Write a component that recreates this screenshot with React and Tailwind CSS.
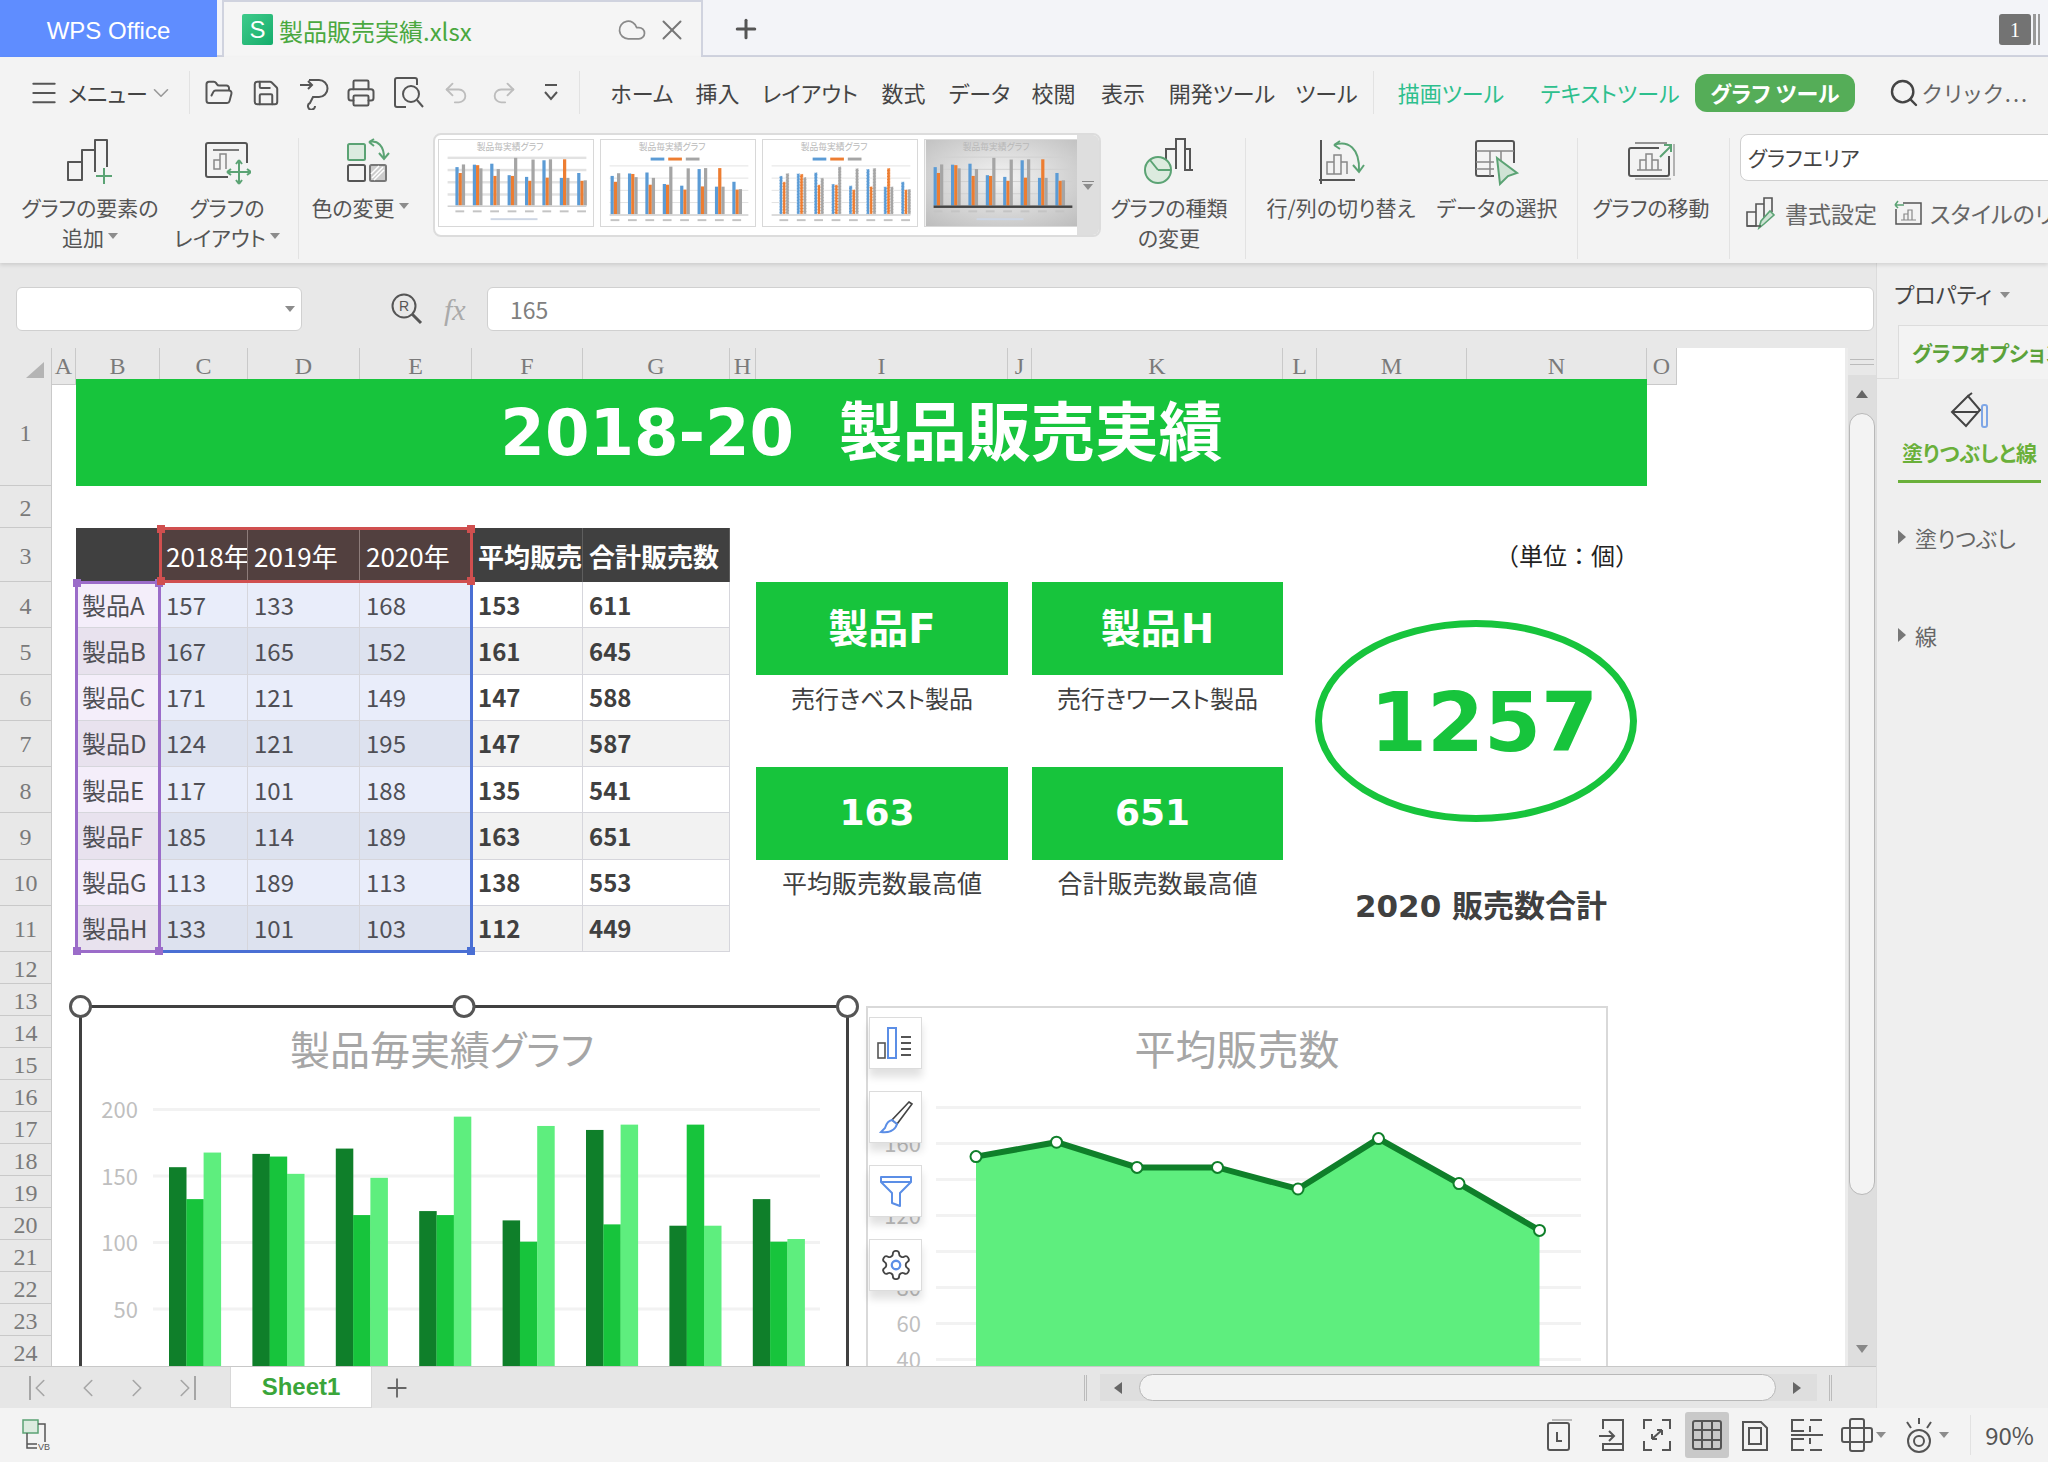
import React from 'react'
import { Cloud, X, Plus, Menu, ChevronDown, FolderOpen, Save, Printer, Undo2, Redo2, Search, ChevronLeft, ChevronRight } from 'lucide-react'

const COLS = ['A', 'B', 'C', 'D', 'E', 'F', 'G', 'H', 'I', 'J', 'K', 'L', 'M', 'N', 'O']
const ROWS = Array.from({ length: 24 }, (_, i) => i + 1)

const TABLE = [
  ['製品A', 157, 133, 168, 153, 611],
  ['製品B', 167, 165, 152, 161, 645],
  ['製品C', 171, 121, 149, 147, 588],
  ['製品D', 124, 121, 195, 147, 587],
  ['製品E', 117, 101, 188, 135, 541],
  ['製品F', 185, 114, 189, 163, 651],
  ['製品G', 113, 189, 113, 138, 553],
  ['製品H', 133, 101, 103, 112, 449],
]

const MENU_TABS = [
  ['ホーム', 'w-[82px]'],
  ['挿入', 'w-[69px]'],
  ['レイアウト', 'w-[116px]'],
  ['数式', 'w-[71px]'],
  ['データ', 'w-[81px]'],
  ['校閲', 'w-[67px]'],
  ['表示', 'w-[72px]'],
  ['開発ツール', 'w-[126px]'],
  ['ツール', 'w-[83px]'],
]

function Caret({ className = '' }) {
  return (
    <svg width="10" height="6" viewBox="0 0 10 6" className={`inline-block ${className}`}>
      <path d="M0 0h10L5 6z" fill="#8c8c8c" />
    </svg>
  )
}

function Sep({ className = '' }) {
  return <div className={`w-px shrink-0 self-stretch bg-[#e2e2e2] ${className}`} />
}

const INK = '#555'
const GR = '#5ba374'

function Ico({ children, w = 48, h = 48, box }) {
  return (
    <svg width={w} height={h} viewBox={box || `0 0 ${w} ${h}`} fill="none" stroke={INK} strokeWidth="2" className="shrink-0">
      {children}
    </svg>
  )
}

function AddElementIcon() {
  return (
    <Ico>
      <path d="M2 42V24h14v18zM16 24V12h13v22M29 12V2h12v27" strokeLinejoin="round" />
      <path d="M38 30v16M30 38h16" stroke={GR} />
    </Ico>
  )
}

function LayoutIcon() {
  return (
    <Ico>
      <path d="M25 39H5a2 2 0 0 1-2-2V7a2 2 0 0 1 2-2h37a2 2 0 0 1 2 2v18" />
      <path d="M10 12h26" strokeWidth="1.5" />
      <path d="M11 31v-9h6v9zM17 31V16h6v15" strokeWidth="1.5" stroke="#888" />
      <path d="M36 22v24M24 34h24M36 22l-3 4M36 22l3 4M36 46l-3-4M36 46l3-4M24 34l4-3M24 34l4 3M48 34l-4-3M48 34l-4 3" stroke={GR} />
    </Ico>
  )
}

function ColorIcon() {
  return (
    <Ico>
      <rect x="3" y="6" width="17" height="16" rx="1.5" fill="#dcebdf" stroke={GR} />
      <rect x="3" y="27" width="17" height="16" rx="1.5" />
      <rect x="25" y="27" width="16" height="16" rx="1.5" fill="#ccc" stroke="#777" />
      <path d="M27 40l11-11M29 42l10-10M26 36l8-8" stroke="#fff" strokeWidth="1.5" />
      <path d="M24 4c9-2 15 4 15 16M34 15l5 6 5-6M24 4l5-3M24 4l5 4" stroke={GR} />
    </Ico>
  )
}

function ChartTypeIcon() {
  return (
    <Ico w={50} h={50}>
      <path d="M22 30V12h10v20M32 12V2h9v31h8M41 12h5v21" />
      <circle cx="14" cy="33" r="13" fill="#dcebdf" stroke={GR} />
      <path d="M14 33L6 23M14 33h13" stroke={GR} />
    </Ico>
  )
}

function SwitchIcon() {
  return (
    <Ico>
      <path d="M4 2v44M2 42h36" />
      <path d="M10 36V24h7v12zM17 36V17h7v19zM24 36V24h6v12" stroke="#888" strokeWidth="1.5" />
      <path d="M17 7c14-5 26 3 25 26M36 27l6 7 5-7M17 7l6-4M17 7l6 4" stroke={GR} />
    </Ico>
  )
}

function DataSelectIcon() {
  return (
    <Ico>
      <path d="M21 38H5a2 2 0 0 1-2-2V5a2 2 0 0 1 2-2h34a2 2 0 0 1 2 2v20" />
      <path d="M3 13h38M3 24h18M3 31h18M17 13v25M28 13v10" strokeWidth="1.5" stroke="#888" />
      <path d="M24 20l20 15-9 3-8 8z" fill="#cfe3d5" stroke={GR} />
    </Ico>
  )
}

function MoveIcon() {
  return (
    <Ico>
      <path d="M8 5h32" strokeWidth="1.2" />
      <path d="M2 36V12a2 2 0 0 1 2-2h28M42 18v18a2 2 0 0 1-2 2H4a2 2 0 0 1-2-2" />
      <path d="M47 6v32M8 41h36" strokeWidth="1.2" stroke="#888" />
      <path d="M10 32h25M13 32V22h6v10M19 32V16h6v16M25 32V22h6v10" strokeWidth="1.5" stroke="#888" />
      <path d="M33 19l11-11M37 7h7v7" stroke={GR} />
    </Ico>
  )
}

function FormatIcon() {
  return (
    <Ico w={32} h={34}>
      <path d="M2 30V16h9v14zM11 16V8h8v14M19 8V2h8v14" strokeWidth="1.6" />
      <path d="M14 32l2-7 9-10 4 4-10 9z" fill="#cfe3d5" stroke={GR} strokeWidth="1.6" />
      <path d="M2 30h14" strokeWidth="1.6" />
    </Ico>
  )
}

function ResetIcon() {
  return (
    <Ico w={30} h={30}>
      <path d="M10 5h18v21H3V11" strokeWidth="1.5" />
      <path d="M8 22h15M11 22v-6h4v6M15 22V12h4v10" strokeWidth="1.2" stroke="#888" />
      <path d="M2 7h9M2 7l3-4M2 7l3 3" stroke={GR} strokeWidth="1.5" />
    </Ico>
  )
}

function RibbonBtn({ icon, lines, caret, width, iconClass = '' }) {
  return (
    <div className={`flex flex-col items-center shrink-0 ${width}`}>
      <div className={`h-[48px] flex items-center justify-center ${iconClass}`}>{icon}</div>
      <div className="mt-[6px] text-[21px] leading-[30px] text-[#555] text-center whitespace-nowrap">
        {lines.map((l, i) => (
          <div key={l}>
            {l}
            {caret && i === lines.length - 1 && <Caret className="ml-1 mb-2" />}
          </div>
        ))}
      </div>
    </div>
  )
}

const SERIES = [
  [157, 167, 171, 124, 117, 185, 113, 133],
  [133, 165, 121, 121, 101, 114, 189, 101],
  [168, 152, 149, 195, 188, 189, 113, 103],
]

function MiniChart({ kind }) {
  const gray = kind === 3
  const legendTop = kind === 1 || kind === 2
  const base = legendTop ? 76 : 67
  const x0 = [16, 9, 16, 8][kind]
  const k = 0.25
  const barW = 3.3
  return (
    <svg viewBox="0 0 156 88" className="block shrink-0 w-[156px] h-[88px] border border-[#d8d8d8]">
      {gray ? (
        <>
          <defs>
            <radialGradient id="miniBg" cx="50%" cy="45%" r="75%">
              <stop offset="0%" stopColor="#f4f4f4" />
              <stop offset="100%" stopColor="#bcbcbc" />
            </radialGradient>
          </defs>
          <rect width="156" height="88" fill="url(#miniBg)" />
        </>
      ) : (
        <rect width="156" height="88" fill="#fff" />
      )}
      <text x="72" y="10" textAnchor="middle" fontSize="9" fill="#b8b8b8">製品毎実績グラフ</text>
      {legendTop && (
        <g>
          <rect x="50" y="18" width="14" height="3" fill="#5b9bd5" />
          <rect x="68" y="18" width="14" height="3" fill="#ed7d31" />
          <rect x="86" y="18" width="14" height="3" fill="#a5a5a5" />
        </g>
      )}
      {[0, 1, 2, 3].map((g) => (
        <rect key={g} x="8" y={base - 50 + g * 12.5} width="142" height={kind === 0 ? 2.5 : 1} fill={gray ? '#d0d0d0' : '#e2e2e2'} />
      ))}
      {SERIES.map((s, si) =>
        s.map((v, i) => (
          <rect
            key={`${si}-${i}`}
            x={x0 + i * 17.8 + si * barW}
            y={base - v * k}
            width={barW}
            height={v * k}
            fill={['#5b9bd5', '#ed7d31', '#a5a5a5'][si]}
            strokeDasharray={kind === 2 ? '2 1' : undefined}
            stroke={kind === 2 ? '#fff' : undefined}
            strokeWidth={kind === 2 ? 0.6 : 0}
          />
        )),
      )}
      <rect x="8" y={base} width="142" height={gray ? 2.5 : 1.5} fill={gray ? '#444' : '#cfcfcf'} />
      {Array.from({ length: 8 }, (_, i) => (
        <rect key={i} x={x0 + i * 17.8} y={base + 5} width="9" height="2" fill="#c4c4c4" />
      ))}
      {!legendTop && <rect x="52" y="80" width="48" height="2" fill="#cdd6e4" />}
    </svg>
  )
}

function Gallery() {
  return (
    <div className="ml-[12px] mt-[-5px] w-[668px] h-[104px] shrink-0 bg-white border-2 border-[#dcdcdc] rounded-[8px] flex overflow-hidden">
      <div className="flex-1 min-w-0 overflow-hidden flex gap-[6px] pl-[3px] pt-[4px]">
        {[0, 1, 2, 3].map((k) => (
          <MiniChart key={k} kind={k} />
        ))}
      </div>
      <div className="w-[22px] shrink-0 bg-[#dedede] flex flex-col items-center justify-center gap-[2px]">
        <div className="w-[12px] h-px bg-[#888]" />
        <Caret />
      </div>
    </div>
  )
}

function TitleBar() {
  return (
    <div className="h-[57px] shrink-0 bg-[#f3f4f8] border-b-2 border-[#d0d3df] flex">
      <div className="w-[217px] h-[57px] pt-[4px] bg-[#5f8dff] flex items-center justify-center text-white text-[24px] font-['Liberation_Sans',sans-serif]">
        WPS Office
      </div>
      <div className="ml-[5px] w-[481px] h-[57px] bg-[#f5f5f5] border-x-2 border-t-2 border-[#d0d3df] flex items-center pl-[18px]">
        <div className="w-[31px] h-[31px] rounded-[2px] bg-gradient-to-br from-[#3ecb8b] to-[#12ad6c] flex items-center justify-center text-white text-[24px] leading-none font-['Liberation_Sans',sans-serif]">
          S
        </div>
        <span className="ml-[6px] pt-[3px] text-[24px] text-[#4aa83f]">製品販売実績.xlsx</span>
        <Cloud className="ml-auto" size={30} strokeWidth={1.4} color="#8a8a8a" />
        <X className="ml-[8px] mr-[12px]" size={34} strokeWidth={1.4} color="#777" />
      </div>
      <Plus className="ml-[28px] mt-[14px]" size={30} strokeWidth={2.4} color="#555" />
      <div className="ml-auto mr-[8px] mt-[14px] flex">
        <div className="w-[32px] h-[31px] bg-[#737373] rounded-[3px] flex items-center justify-center text-white text-[20px] font-['Liberation_Serif',serif]">
          1
        </div>
        <div className="ml-[2px] w-[3px] h-[31px] bg-[#999]" />
        <div className="ml-[2px] w-[2px] h-[31px] bg-[#999]" />
      </div>
    </div>
  )
}

function PasteArrowIcon() {
  return (
    <svg width="30" height="34" viewBox="0 0 30 34" fill="none" stroke={INK} strokeWidth="2">
      <path d="M10 4h10a8 8 0 0 1 0 17h-6l-3 6a3.5 3.5 0 1 0 5 3" />
      <path d="M1 9h12M9 5l4 4-4 4" />
    </svg>
  )
}

function PreviewIcon() {
  return (
    <svg width="32" height="34" viewBox="0 0 32 34" fill="none" stroke={INK} strokeWidth="2">
      <path d="M13 31H4a2 2 0 0 1-2-2V4a2 2 0 0 1 2-2h18a2 2 0 0 1 2 2v5" />
      <circle cx="18" cy="18" r="8" />
      <path d="M24 24l6 7" />
    </svg>
  )
}

function MenuRow() {
  const quick = [
    <FolderOpen key="o" size={30} strokeWidth={1.6} color={INK} />,
    <Save key="s" size={30} strokeWidth={1.6} color={INK} />,
    <PasteArrowIcon key="p" />,
    <Printer key="r" size={30} strokeWidth={1.6} color={INK} />,
    <PreviewIcon key="f" />,
    <Undo2 key="u" size={28} strokeWidth={1.6} color="#bdbdbd" />,
    <Redo2 key="e" size={28} strokeWidth={1.6} color="#bdbdbd" />,
    <svg key="d" width="18" height="20" viewBox="0 0 18 20" fill="none" stroke={INK} strokeWidth="2">
      <path d="M3 2h12M3 9l6 7 6-7" />
    </svg>,
  ]
  return (
    <div className="h-[71px] shrink-0 flex items-center text-[22px] text-[#444] py-[14px]">
      <Menu className="ml-[28px] shrink-0" size={32} strokeWidth={1.5} color={INK} />
      <span className="ml-[8px] w-[68px] whitespace-nowrap">メニュー</span>
      <ChevronDown className="ml-[12px] shrink-0" size={26} strokeWidth={1.5} color="#999" />
      <Sep className="ml-[15px]" />
      <div className="ml-[5px] flex w-[382px] shrink-0">
        {quick.map((q, i) => (
          <div key={i} className="w-[47.5px] flex justify-center items-center">{q}</div>
        ))}
      </div>
      <Sep className="ml-[2px]" />
      <div className="ml-[21px] flex shrink-0">
        {MENU_TABS.map(([label, w]) => (
          <div key={label} className={`${w} text-center whitespace-nowrap`}>{label}</div>
        ))}
      </div>
      <Sep className="ml-[5px]" />
      <div className="w-[154px] shrink-0 text-center text-[#2dbf8d] whitespace-nowrap">描画ツール</div>
      <div className="w-[164px] shrink-0 text-center text-[#2dbf8d] whitespace-nowrap">テキストツール</div>
      <div className="ml-[3px] w-[160px] h-[38px] shrink-0 rounded-[12px] bg-[#55ad58] text-white font-bold flex items-center justify-center whitespace-nowrap">
        グラフ ツール
      </div>
      <Search className="ml-[33px] shrink-0" size={32} strokeWidth={1.8} color="#444" />
      <span className="ml-[2px] tracking-[2px] text-[#666] whitespace-nowrap">クリック...</span>
    </div>
  )
}

function RibbonRow() {
  return (
    <div className="flex pt-[10px] pb-[4px] h-[135px] shrink-0">
      <RibbonBtn width="w-[180px]" icon={<AddElementIcon />} lines={['グラフの要素の', '追加']} caret />
      <RibbonBtn width="w-[94px]" icon={<LayoutIcon />} lines={['グラフの', 'レイアウト']} caret />
      <Sep className="ml-[24px]" />
      <RibbonBtn width="w-[122px]" iconClass="pl-[18px]" icon={<ColorIcon />} lines={['色の変更']} caret />
      <Gallery />
      <RibbonBtn width="w-[136px]" icon={<ChartTypeIcon />} lines={['グラフの種類', 'の変更']} />
      <Sep className="ml-[8px]" />
      <RibbonBtn width="w-[190px]" icon={<SwitchIcon />} lines={['行/列の切り替え']} />
      <RibbonBtn width="w-[122px]" icon={<DataSelectIcon />} lines={['データの選択']} />
      <Sep className="ml-[19px]" />
      <RibbonBtn width="w-[146px]" icon={<MoveIcon />} lines={['グラフの移動']} />
      <Sep className="ml-[5px]" />
      <div className="ml-[10px] w-[330px] shrink-0">
        <div className="mt-[-4px] h-[47px] bg-white border border-[#cfcfcf] rounded-l-[8px] flex items-center pl-[7px] text-[21px] text-[#444]">
          グラフエリア
        </div>
        <div className="mt-[15px] pl-[5px] flex items-center text-[23px] text-[#666] whitespace-nowrap">
          <FormatIcon />
          <span className="ml-[8px]">書式設定</span>
          <div className="ml-[16px]"><ResetIcon /></div>
          <span className="ml-[7px]">スタイルのリセット</span>
        </div>
      </div>
    </div>
  )
}

function FormulaBar() {
  return (
    <div className="h-[85px] shrink-0 bg-[#e8e8e8] flex items-center pt-[7px] pl-[16px] pr-[2px]">
      <div className="w-[286px] h-[44px] bg-white border border-[#d0d0d0] rounded-[6px] flex items-center justify-end pr-[6px]">
        <Caret />
      </div>
      <div className="ml-[88px] w-[34px] flex justify-center">
        <svg width="34" height="34" viewBox="0 0 34 34" fill="none" stroke="#555" strokeWidth="2">
          <circle cx="14" cy="14" r="11.5" />
          <path d="M22 22l9 9" strokeWidth="3" />
          <text x="9" y="19" fontSize="14" fill="#555" stroke="none" fontFamily="Liberation Sans">R</text>
        </svg>
      </div>
      <span className="ml-[20px] w-[43px] italic text-[30px] text-[#aaa] font-['Liberation_Serif',serif]">fx</span>
      <div className="flex-1 h-[44px] bg-white border border-[#d0d0d0] rounded-[6px] flex items-center pl-[22px] text-[23px] text-[#808080]">
        165
      </div>
    </div>
  )
}

function Handle({ pos, color }) {
  return <div className={`absolute w-[8px] h-[8px] ${pos} ${color}`} />
}

function TableCells() {
  const hd = 'border-r flex items-center overflow-hidden whitespace-nowrap text-white text-[26px] pl-[6px]'
  return (
    <div className="col-start-3 col-span-6 row-start-4 row-span-9 grid grid-cols-subgrid grid-rows-subgrid">
      <div className="bg-[#404040]" />
      {['2018年', '2019年', '2020年'].map((y) => (
        <div key={y} className={`${hd} bg-[#52403f] border-[#8d7c7a]`}>{y}</div>
      ))}
      <div className={`${hd} bg-[#404040] border-[#5e5e5e] font-bold`}>平均販売数</div>
      <div className={`${hd} bg-[#404040] border-[#5e5e5e] font-bold`}>合計販売数</div>
      {TABLE.map(([name, a, b, c, avg, total], i) => {
        const even = i % 2 === 1
        const line = 'border-r border-b border-[#d6d6dc] flex items-center pl-[6px] text-[24px] whitespace-nowrap'
        const tint = even ? 'bg-[#dde2ef]' : 'bg-[#e9edfa]'
        return (
          <React.Fragment key={name}>
            <div className={`${line} text-[#4f4f55] ${even ? 'bg-[#e8e2ee]' : 'bg-[#f4eefa]'}`}>{name}</div>
            {[a, b, c].map((v, j) => (
              <div key={j} className={`${line} text-[#4f4f55] ${tint}`}>{v}</div>
            ))}
            <div className={`${line} font-bold text-[#404040] ${even ? 'bg-[#f2f2f2]' : 'bg-white'}`}>{avg}</div>
            <div className={`${line} font-bold text-[#404040] ${even ? 'bg-[#f2f2f2]' : 'bg-white'}`}>{total}</div>
          </React.Fragment>
        )
      })}
    </div>
  )
}

const WIDE_BOLD = "font-['DejaVu_Sans','Noto_Sans_CJK_JP',sans-serif] font-bold"

function Card({ pos, children, extra = '' }) {
  return (
    <div className={`${pos} bg-[#17c43c] text-white flex items-center justify-center ${WIDE_BOLD} ${extra}`}>
      {children}
    </div>
  )
}

function Label({ pos, size = 'text-[24px]', children }) {
  return <div className={`${pos} ${size} flex items-center justify-center text-[#404040] whitespace-nowrap`}>{children}</div>
}

function ChartFrame({ children, className }) {
  return <div className={`absolute bg-white h-[400px] ${className}`}>{children}</div>
}

function BarChart() {
  const colors = ['#0f7f2a', '#17c43c', '#5eee7e']
  return (
    <ChartFrame className="left-[79px] top-[657px] w-[770px] border-x-[3px] border-t-[3px] border-[#404040]">
      <div className="mt-[10px] mb-[2px] h-[60px] flex items-center justify-center pr-[44px] text-[40px] text-[#a6a6a6] whitespace-nowrap">
        製品毎実績グラフ
      </div>
      <svg width="764" height="300" className="block">
        {[200, 150, 100, 50].map((v) => (
          <g key={v}>
            <rect x="71" y={296 - 1.33 * v - 2} width="667" height="3" fill="#f2f2f2" />
            <text x="56" y={296 - 1.33 * v + 8} textAnchor="end" fontSize="22" fill="#bfbfbf">{v}</text>
          </g>
        ))}
        {SERIES.map((s, si) =>
          s.map((v, i) => (
            <rect key={`${si}-${i}`} x={87 + i * 83.4 + si * 17.3} y={296 - 1.33 * v} width="17.5" height={1.33 * v} fill={colors[si]} />
          )),
        )}
      </svg>
      {['-left-[13px]', 'left-1/2 -translate-x-1/2', '-right-[13px]'].map((p) => (
        <div key={p} className={`absolute -top-[13px] w-[23px] h-[23px] rounded-full bg-white border-[3px] border-[#555] ${p}`} />
      ))}
    </ChartFrame>
  )
}

function AreaChart() {
  const avg = SERIES[0].map((_, i) => TABLE[i][4])
  const pts = avg.map((v, i) => [108 + i * 80.5, 352 - 1.8 * v])
  const line = pts.map((p) => p.join(',')).join(' ')
  return (
    <ChartFrame className="left-[866px] top-[658px] w-[742px] border-x-2 border-t-2 border-[#d9d9d9]">
      <div className="mt-[10px] mb-[2px] h-[60px] flex items-center justify-center text-[41px] text-[#a6a6a6] whitespace-nowrap">
        平均販売数
      </div>
      <svg width="738" height="300" className="block">
        {[180, 160, 140, 120, 100, 80, 60, 40].map((v) => (
          <g key={v}>
            <rect x="68" y={352 - 1.8 * v - 2} width="645" height="3" fill="#f2f2f2" />
            <text x="53" y={352 - 1.8 * v + 8} textAnchor="end" fontSize="22" fill="#bfbfbf">{v}</text>
          </g>
        ))}
        <polygon points={`${pts[0][0]},300 ${line} ${pts[7][0]},300`} fill="#5eee7e" />
        <polyline points={line} fill="none" stroke="#0f7f2a" strokeWidth="6" />
        {pts.map(([x, y]) => (
          <circle key={x} cx={x} cy={y} r="5.5" fill="#fff" stroke="#0f7f2a" strokeWidth="2" />
        ))}
      </svg>
      <ChartToolbar />
    </ChartFrame>
  )
}

function ChartToolbar() {
  const blue = '#5b8ee6'
  const icons = [
    <svg key="a" width="38" height="34" viewBox="0 0 38 34" fill="none" stroke="#555" strokeWidth="1.6">
      <rect x="1" y="17" width="7" height="15" />
      <rect x="11" y="2" width="8" height="30" stroke={blue} strokeWidth="2" />
      <path d="M24 11h10M24 17h10M24 23h10M24 29h10" strokeWidth="2.2" />
    </svg>,
    <svg key="b" width="36" height="34" viewBox="0 0 36 34" fill="none" stroke="#444" strokeWidth="1.6">
      <path d="M31 2l3 2-15 20-5-4z" />
      <path d="M14 20c-5 1-6 5-7 8l-4 4c7 1 14-1 16-8z" stroke={blue} strokeWidth="2" />
    </svg>,
    <svg key="c" width="34" height="34" viewBox="0 0 34 34" fill="none" stroke={blue} strokeWidth="2">
      <path d="M2 3h30v5L21 19v13l-8-3V19L2 8zM2 8h30" strokeLinejoin="round" />
    </svg>,
    <svg key="d" width="34" height="34" viewBox="0 0 24 24" fill="none" stroke="#444" strokeWidth="1.3">
      <path d="M12.22 2h-.44a2 2 0 0 0-2 2v.18a2 2 0 0 1-1 1.73l-.43.25a2 2 0 0 1-2 0l-.15-.08a2 2 0 0 0-2.73.73l-.22.38a2 2 0 0 0 .73 2.73l.15.1a2 2 0 0 1 1 1.72v.51a2 2 0 0 1-1 1.74l-.15.09a2 2 0 0 0-.73 2.73l.22.38a2 2 0 0 0 2.73.73l.15-.08a2 2 0 0 1 2 0l.43.25a2 2 0 0 1 1 1.73V20a2 2 0 0 0 2 2h.44a2 2 0 0 0 2-2v-.18a2 2 0 0 1 1-1.73l.43-.25a2 2 0 0 1 2 0l.15.08a2 2 0 0 0 2.73-.73l.22-.39a2 2 0 0 0-.73-2.73l-.15-.08a2 2 0 0 1-1-1.74v-.5a2 2 0 0 1 1-1.74l.15-.09a2 2 0 0 0 .73-2.73l-.22-.38a2 2 0 0 0-2.73-.73l-.15.08a2 2 0 0 1-2 0l-.43-.25a2 2 0 0 1-1-1.73V4a2 2 0 0 0-2-2z" />
      <circle cx="12" cy="12" r="3" stroke={blue} strokeWidth="1.6" />
    </svg>,
  ]
  return (
    <div className="absolute left-px top-[9px] flex flex-col gap-[22px]">
      {icons.map((ic, i) => (
        <div key={i} className="w-[53px] h-[52px] bg-white border border-[#dcdcdc] shadow-[0_8px_8px_rgba(0,0,0,0.12)] flex items-center justify-center">
          {ic}
        </div>
      ))}
    </div>
  )
}

function Sheet() {
  return (
    <div className="relative flex-1 overflow-hidden bg-white grid grid-cols-[52px_24px_84px_88px_112px_112px_111px_147px_26px_252px_24px_251px_34px_150px_180px_30px_168px] grid-rows-[31px_107px_42px_54px_repeat(8,46.25px)_repeat(13,32px)]">
      {/* column and row headers */}
      <div className="col-start-1 col-span-16 row-start-1 grid grid-cols-subgrid font-['Liberation_Serif',serif] text-[24px] text-[#7a7a7a]">
        <div className="bg-[#e8e8e8] border-b border-r border-[#c9c9c9] flex items-end justify-end pr-[7px] pb-[6px]">
          <svg width="18" height="16"><path d="M18 0v16H0z" fill="#b4b4b4" /></svg>
        </div>
        {COLS.map((c) => (
          <div key={c} className="bg-[#e8e8e8] border-b border-r border-[#c9c9c9] flex items-center justify-center">{c}</div>
        ))}
      </div>
      <div className="col-start-1 row-start-2 row-span-24 grid grid-rows-subgrid font-['Liberation_Serif',serif] text-[24px] text-[#7a7a7a]">
        {ROWS.map((r) => (
          <div key={r} className="bg-[#e8e8e8] border-b border-r border-[#c9c9c9] flex items-center justify-center pt-[2px]">{r}</div>
        ))}
      </div>

      <div className={`col-start-3 col-span-13 row-start-2 bg-[#17c43c] text-white text-[64px] whitespace-pre flex items-center justify-center ${WIDE_BOLD}`}>
        2018-20  製品販売実績
      </div>

      <TableCells />

      <div className="col-start-14 col-span-2 row-start-4 flex items-center justify-end pr-[8px] text-[24px] text-[#222] whitespace-nowrap [font-feature-settings:normal]">（単位：個）</div>

      <Card pos="col-start-10 row-start-5 row-span-2" extra="text-[40px] pt-[2px]">製品F</Card>
      <Card pos="col-start-12 row-start-5 row-span-2" extra="text-[40px] pt-[2px]">製品H</Card>
      <Label pos="col-start-10 row-start-7">売行きベスト製品</Label>
      <Label pos="col-start-12 row-start-7">売行きワースト製品</Label>
      <Card pos="col-start-10 row-start-9 row-span-2" extra="text-[36px] pr-[10px]">163</Card>
      <Card pos="col-start-12 row-start-9 row-span-2" extra="text-[36px] pr-[10px]">651</Card>
      <Label pos="col-start-10 row-start-11" size="text-[25px]">平均販売数最高値</Label>
      <Label pos="col-start-12 row-start-11" size="text-[25px]">合計販売数最高値</Label>

      <div className="col-start-13 col-span-3 row-start-5 row-span-6 mt-[38px] ml-[32px] w-[322px] h-[202px] rounded-[50%] border-[7px] border-[#17c43c] flex items-center justify-center pl-[16px] pt-[4px]">
        <span className={`text-[82px] leading-none text-[#17c43c] ${WIDE_BOLD}`}>1257</span>
      </div>
      <div className={`col-start-13 col-span-3 row-start-11 row-span-2 pl-[32px] flex items-center justify-center text-[31px] text-[#404040] whitespace-pre ${WIDE_BOLD}`}>
        2020 販売数合計
      </div>

      {/* range selection */}
      <div className="col-start-4 col-span-3 row-start-5 row-span-8 -m-px border-[3px] border-l-0 border-t-0 border-[#4a6fd4] relative pointer-events-none">
        <Handle pos="-bottom-[5px] -right-[5px]" color="bg-[#4a6fd4]" />
      </div>
      <div className="col-start-3 row-start-5 row-span-8 -m-px border-[3px] border-[#9b6cc9] relative pointer-events-none">
        <Handle pos="-top-[5px] -left-[5px]" color="bg-[#9b6cc9]" />
        <Handle pos="-top-[5px] -right-[5px]" color="bg-[#9b6cc9]" />
        <Handle pos="-bottom-[5px] -left-[5px]" color="bg-[#9b6cc9]" />
        <Handle pos="-bottom-[5px] -right-[5px]" color="bg-[#9b6cc9]" />
      </div>
      <div className="col-start-4 col-span-3 row-start-4 -m-px border-[3px] border-[#d04f4f] relative pointer-events-none">
        <Handle pos="-top-[5px] -left-[5px]" color="bg-[#d04f4f]" />
        <Handle pos="-top-[5px] -right-[5px]" color="bg-[#d04f4f]" />
        <Handle pos="-bottom-[5px] -left-[5px]" color="bg-[#d04f4f]" />
        <Handle pos="-bottom-[5px] -right-[5px]" color="bg-[#d04f4f]" />
      </div>

      <AreaChart />
      <BarChart />
    </div>
  )
}

function VScroll() {
  return (
    <div className="w-[31px] shrink-0 flex flex-col border-l-[3px] border-[#ececec]">
      <div className="h-[27px] bg-[#e8e8e8] flex flex-col items-center justify-center gap-[4px]">
        <div className="w-[24px] h-px bg-[#bbb]" />
        <div className="w-[24px] h-px bg-[#bbb]" />
      </div>
      <div className="flex-1 bg-[#dedede] flex flex-col items-center">
        <div className="h-[38px] flex items-center"><svg width="12" height="8"><path d="M0 8h12L6 0z" fill="#666" /></svg></div>
        <div className="w-[26px] h-[782px] bg-[#f3f3f3] border border-[#b8b8b8] rounded-full" />
        <div className="mt-auto mb-[13px]"><svg width="12" height="8"><path d="M0 0h12L6 8z" fill="#888" /></svg></div>
      </div>
    </div>
  )
}

function TabsBar() {
  return (
    <div className="h-[42px] shrink-0 bg-[#e6e6e6] border-t border-[#c8c8c8] flex items-stretch">
      <div className="ml-[14px] flex text-[#a6a6a6]">
        {[
          <span key="a" className="flex items-center pl-[6px]"><span className="w-[2px] h-[24px] bg-[#a6a6a6]" /><ChevronLeft size={30} strokeWidth={1.3} className="-ml-[6px]" /></span>,
          <ChevronLeft key="b" size={30} strokeWidth={1.3} />,
          <ChevronRight key="c" size={30} strokeWidth={1.3} />,
          <span key="d" className="flex items-center pr-[6px]"><ChevronRight size={30} strokeWidth={1.3} className="-mr-[6px]" /><span className="w-[2px] h-[24px] bg-[#a6a6a6]" /></span>,
        ].map((n, i) => (
          <div key={i} className="w-[49px] flex items-center justify-center">{n}</div>
        ))}
      </div>
      <div className="ml-[20px] w-[142px] bg-white border-x border-b border-[#d8d8d8] flex items-center justify-center text-[24px] font-bold text-[#3aa53a] font-['Liberation_Sans',sans-serif]">
        Sheet1
      </div>
      <div className="w-[50px] flex items-center justify-center">
        <Plus size={30} strokeWidth={1.5} color="#666" />
      </div>
      <div className="ml-auto flex items-center pr-[44px]">
        <div className="w-[3px] h-[26px] border-x border-[#bbb]" />
        <div className="ml-[13px] w-[717px] h-[27px] bg-[#dedede] flex items-center relative">
          <svg width="8" height="12" className="ml-[14px]"><path d="M8 0v12L0 6z" fill="#666" /></svg>
          <div className="ml-[17px] w-[637px] h-[27px] bg-[#f3f3f3] border border-[#b8b8b8] rounded-full" />
          <svg width="8" height="12" className="ml-[17px]"><path d="M0 0v12l8-6z" fill="#666" /></svg>
        </div>
        <div className="ml-[12px] w-[3px] h-[26px] border-x border-[#bbb]" />
      </div>
    </div>
  )
}

function Panel() {
  return (
    <div className="flex-1 bg-[#efefef] border-l border-[#dcdcdc] overflow-hidden">
      <div className="pt-[14px] pl-[17px] h-[62px] text-[22px] text-[#444] whitespace-nowrap">
        プロパティ<Caret className="ml-2 mb-1" />
      </div>
      <div className="h-[54px] border-b border-[#dcdcdc] pl-[21px]">
        <div className="w-[200px] h-[54px] bg-[#f3f3f3] border-l border-t border-[#dcdcdc] pl-[13px] flex items-center text-[21px] font-bold text-[#5ba23a] whitespace-nowrap">
          グラフオプション
        </div>
      </div>
      <div className="w-[143px] ml-[21px] h-[104px] border-b-[3px] border-[#6ab03a] flex flex-col items-center">
        <svg width="40" height="40" viewBox="0 0 40 40" fill="none" stroke="#444" strokeWidth="2" className="mt-[12px]">
          <path d="M2 21L18 5l12 14-14 16z" />
          <path d="M3 21h25M18 5l4-3" />
          <rect x="32" y="14" width="5" height="22" rx="2" stroke="#7ea6e6" />
        </svg>
        <div className="mt-[6px] text-[21px] font-bold text-[#6ab03a] whitespace-nowrap">塗りつぶしと線</div>
      </div>
      <div className="mt-[39px] pl-[21px] flex items-center text-[22px] text-[#666] h-[30px]">
        <svg width="8" height="14"><path d="M0 0v14l8-7z" fill="#777" /></svg>
        <span className="ml-[9px]">塗りつぶし</span>
      </div>
      <div className="mt-[68px] pl-[21px] flex items-center text-[22px] text-[#666] h-[30px]">
        <svg width="8" height="14"><path d="M0 0v14l8-7z" fill="#777" /></svg>
        <span className="ml-[9px]">線</span>
      </div>
    </div>
  )
}

function StatusBar() {
  const ic = { fill: 'none', stroke: INK, strokeWidth: 2 }
  const icons = [
    ['ml-[0px]', <svg key="a" width="28" height="34" viewBox="0 0 28 34" {...ic}><rect x="2" y="5" width="21" height="27" rx="2" /><path d="M6 2h20" stroke="#bbb" /><path d="M11 14v9h5" /></svg>],
    ['ml-[8px]', <svg key="b" width="28" height="36" viewBox="0 0 28 36" {...ic}><path d="M5 12V3h20v30H5v-7M5 27h20" /><path d="M1 19h15M11 14l5 5-5 5" /></svg>],
    ['ml-[1px]', <svg key="c" width="30" height="34" viewBox="0 0 30 34" {...ic}><path d="M10 2H2v9M20 2h8v9M10 32H2v-9M20 32h8v-9M10 21l10-9M20 12h-5M20 12v5M10 21h5M10 21v-5" /></svg>],
    ['ml-[6px] bg-[#c9c9c9] rounded-[3px] h-[46px]', <svg key="d" width="32" height="32" viewBox="0 0 32 32" {...ic}><rect x="2" y="2" width="28" height="28" rx="2" /><path d="M2 11h28M2 21h28M11 2v28M21 2v28" /></svg>],
    ['ml-[4px]', <svg key="e" width="28" height="36" viewBox="0 0 28 36" {...ic}><path d="M2 5h18l6 6v22H2z" /><path d="M8 11h12v16H8z" /></svg>],
    ['ml-[8px]', <svg key="f" width="34" height="34" viewBox="0 0 34 34" {...ic}><path d="M14 2H2v11h12M14 21H2v11h12M20 2h12M20 32h12M1 17h32M20 8v6M20 20v6" /></svg>],
    ['ml-[6px] gap-[2px]', <React.Fragment key="g"><svg width="34" height="36" viewBox="0 0 34 36" {...ic}><rect x="10" y="2" width="14" height="32" rx="2" /><rect x="2" y="11" width="30" height="14" rx="2" /></svg><Caret className="-mr-[12px] shrink-0" /></React.Fragment>],
    ['ml-[18px] gap-[2px]', <React.Fragment key="h"><svg width="36" height="36" viewBox="0 0 36 36" {...ic}><circle cx="18" cy="24" r="11" /><circle cx="18" cy="24" r="5" /><path d="M18 1v6M6 5l4 6M30 5l-4 6" /></svg><Caret className="-mr-[12px] shrink-0" /></React.Fragment>],
  ]
  return (
    <div className="h-[54px] shrink-0 bg-[#f3f3f3] flex items-center">
      <svg width="32" height="32" viewBox="0 0 32 32" fill="none" stroke={INK} strokeWidth="1.5" className="ml-[22px]">
        <rect x="1" y="1" width="15" height="13" fill="#dcebdf" stroke={GR} />
        <path d="M16 5h7v18M5 14v15h10M5 25h10" />
        <text x="16" y="31" fontSize="9" fill="#555" stroke="none" fontFamily="Liberation Sans">VB</text>
      </svg>
      <div className="ml-auto flex items-center">
        {icons.map(([cls, el], i) => (
          <div key={i} className={`w-[44px] flex items-center justify-center ${cls}`}>{el}</div>
        ))}
        <div className="ml-[29px] w-px h-[40px] bg-[#e2e2e2]" />
        <div className="w-[77px] text-center text-[24px] text-[#555]">90%</div>
      </div>
    </div>
  )
}

export default function App() {
  return (
    <div className="w-[2048px] h-[1462px] overflow-hidden flex flex-col bg-[#f3f3f3] font-['Noto_Sans_CJK_JP',sans-serif] [font-feature-settings:'palt']">
      <TitleBar />
      <div className="h-[206px] shrink-0 bg-[#f3f3f3] shadow-[0_2px_4px_rgba(0,0,0,0.12)] relative z-20 flex flex-col overflow-hidden">
        <MenuRow />
        <RibbonRow />
      </div>
      <div className="flex-1 min-h-0 flex">
        <div className="w-[1876px] shrink-0 flex flex-col">
          <FormulaBar />
          <div className="flex-1 min-h-0 flex">
            <Sheet />
            <VScroll />
          </div>
          <TabsBar />
        </div>
        <Panel />
      </div>
      <StatusBar />
    </div>
  )
}
